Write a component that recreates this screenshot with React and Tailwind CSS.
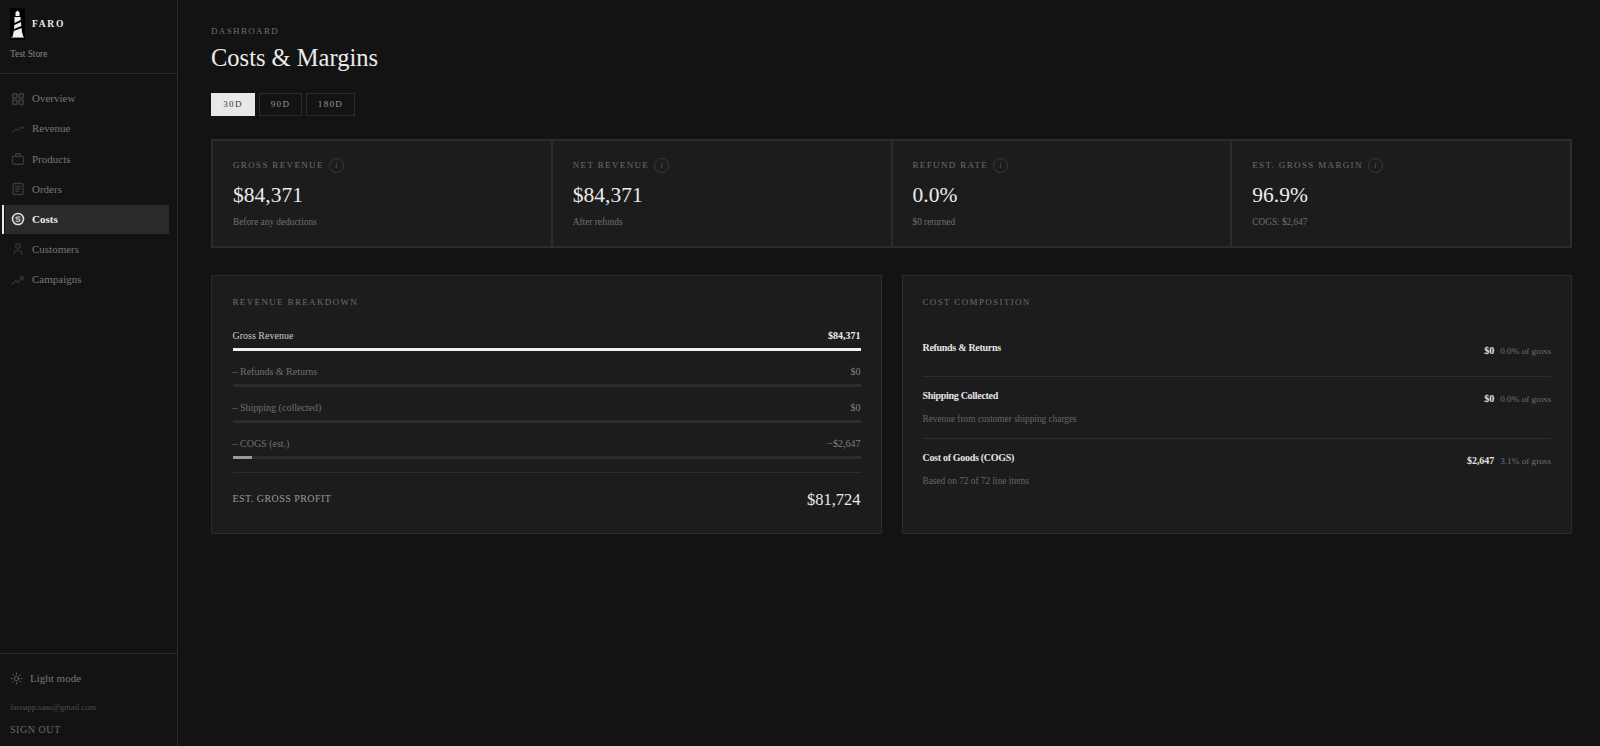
import React from "react";
import { User, Sun } from "lucide-react";

function Lighthouse() {
  return (
    <svg width="15" height="32" viewBox="0 0 15 32" className="shrink-0">
      <rect width="15" height="32" fill="#000" />
      <path d="M7.5 2.5 L9.5 4.5 L9.5 8 L5.5 8 L5.5 4.5 Z" fill="#eee" />
      <path d="M4.5 9 L10.5 9 L10.7 12 L4.5 15 Z" fill="#eee" />
      <path d="M4.3 17 L11 14 L11.3 18 L4 21 Z" fill="#eee" />
      <path d="M3.8 23 L11.6 20 L12 24 L13.5 29 L2.5 29 Z" fill="#eee" />
      <rect x="1" y="29" width="13" height="1" fill="#888" />
    </svg>
  );
}

function Svg({ children, className, sw = 1.8 }) {
  return (
    <svg width="14" height="14" viewBox="0 0 24 24" fill="none" stroke="currentColor" strokeWidth={sw} strokeLinecap="round" strokeLinejoin="round" className={`shrink-0 ${className}`}>
      {children}
    </svg>
  );
}

const GridIcon = (p) => (
  <Svg {...p} sw={3}>
    <rect x="3" y="3" width="7" height="7" rx="1" />
    <rect x="14" y="3" width="7" height="7" rx="1" />
    <rect x="3" y="14" width="7" height="7" rx="1" />
    <rect x="14" y="14" width="7" height="7" rx="1" />
  </Svg>
);
const WaveIcon = (p) => (
  <Svg {...p}>
    <path d="M2 18 L8 12 L12 14 L16 9 L19 11 L22 9" />
  </Svg>
);
const BagIcon = (p) => (
  <Svg {...p} sw={2.2}>
    <rect x="2.5" y="7.5" width="19" height="13.5" rx="2" />
    <path d="M8 7.5 V4 a1 1 0 0 1 1 -1 h6 a1 1 0 0 1 1 1 V7.5" />
  </Svg>
);
const DocIcon = (p) => (
  <Svg {...p} sw={2.4}>
    <rect x="3.5" y="2.5" width="17" height="19" rx="1.5" />
    <path d="M8 8 h8 M8 12 h8 M8 16 h5" />
  </Svg>
);
const CoinIcon = (p) => (
  <Svg {...p} sw={2.6}>
    <circle cx="12" cy="12" r="9.5" fill="#3a3a3a" />
    <path d="M15.5 8.5 h-5 a1.8 1.8 0 1 0 0 3.6 h3 a1.8 1.8 0 1 1 0 3.6 h-5" strokeWidth="1.8" />
  </Svg>
);
const UserIcon = ({ className }) => <User size={14} strokeWidth={1.8} className={`shrink-0 ${className}`} />;
const TrendIcon = (p) => (
  <Svg {...p} sw={2}>
    <path d="M2 19 L8 13 L12 16 L20 7" />
    <path d="M15.5 7 H20.5 V12" />
  </Svg>
);

function Nav({ icon: I, label, active }) {
  return (
    <div className="relative h-[29px] mb-[1.2px] flex items-center">
      {active && <div className="absolute left-[-8.5px] top-0 w-[2.5px] h-[29px] bg-[#e8e8e8]" />}
      <div className={`flex items-center gap-[7px] h-full w-[164px] -ml-[5px] pl-[6px] ${active ? "bg-[#2a2a2a] font-bold" : ""}`}>
        <I className={active ? "text-[#e0e0e0]" : "text-[#393939]"} />
        <span className={`text-[11px] ${active ? "text-[#ececec]" : "text-[#767676]"}`}>{label}</span>
      </div>
    </div>
  );
}

function Kpi({ label, value, sub }) {
  return (
    <div className="flex-1 bg-[#1c1c1c] pl-[20px] pt-[17px] h-[105px]">
      <div className="flex items-center gap-[5px] h-[16px]">
        <span className="text-[9px] tracking-[1.35px] text-[#6e6e6e] uppercase">{label}</span>
        <span className="w-[15px] h-[15px] rounded-full border border-[#3a3a3a] text-[9px] text-[#555] italic flex items-center justify-center -mt-[1px]">i</span>
      </div>
      <div className="text-[21.5px] leading-[26px] text-[#ebebeb] mt-[8px]">{value}</div>
      <div className="text-[9.3px] text-[#707070] mt-[8px]">{sub}</div>
    </div>
  );
}

function Bar({ label, value, fill, strong }) {
  return (
    <div className="mb-[13px]">
      <div className="flex justify-between items-center h-[14px]">
        <span className={`text-[10px] ${strong ? "text-[#c8c8c8]" : "text-[#707070]"}`}>{label}</span>
        <span className={`text-[10px] ${strong ? "text-[#ebebeb] font-bold" : "text-[#808080]"}`}>{value}</span>
      </div>
      <div className="h-[3px] mt-[6px] bg-[#2c2c2c]">{fill}</div>
    </div>
  );
}

function Cost({ name, note, value, pct, h, border }) {
  return (
    <div className={`flex justify-between ${h} ${border ? "border-b border-[#2c2c2c]" : ""}`}>
      <div>
        <div className="text-[10px] tracking-[-0.3px] font-bold text-[#e4e4e4] leading-[14px]">{name}</div>
        {note && <div className="text-[9.3px] text-[#666] mt-[9.5px] leading-[13px]">{note}</div>}
      </div>
      <div className="flex items-baseline gap-[6px] h-[14px] mt-[3px]">
        <span className="text-[10px] tracking-[-0.05px] font-bold text-[#e4e4e4] leading-[14px]">{value}</span>
        <span className="text-[9.2px] text-[#707070] leading-[14px]">{pct}</span>
      </div>
    </div>
  );
}

export default function App() {
  return (
    <div className="flex h-[746px] w-[1600px] bg-[#131313] overflow-hidden" style={{ fontFamily: '"Liberation Serif", serif' }}>
      <aside className="w-[178px] shrink-0 border-r border-[#2a2a2a] flex flex-col">
        <div className="h-[74px] border-b border-[#2a2a2a] pl-[10px] pt-[8px]">
          <div className="flex items-center gap-[7px]">
            <Lighthouse />
            <span className="text-[9.5px] font-bold tracking-[1.7px] text-[#ececec]">FARO</span>
          </div>
          <div className="text-[9.3px] text-[#888] mt-[8px]">Test Store</div>
        </div>
        <nav className="pl-[10px] pt-[10px] flex-1">
          <Nav icon={GridIcon} label="Overview" />
          <Nav icon={WaveIcon} label="Revenue" />
          <Nav icon={BagIcon} label="Products" />
          <Nav icon={DocIcon} label="Orders" />
          <Nav icon={CoinIcon} label="Costs" active />
          <Nav icon={UserIcon} label="Customers" />
          <Nav icon={TrendIcon} label="Campaigns" />
        </nav>
        <div className="h-[93px] border-t border-[#2a2a2a] pl-[10px] pt-[17px]">
          <div className="flex items-center gap-[7px] h-[14px]">
            <Sun size={13} strokeWidth={1.5} className="text-[#777]" />
            <span className="text-[11px] text-[#777]">Light mode</span>
          </div>
          <div className="text-[8.5px] text-[#4d4d4d] mt-[16px]">faroapp.saas@gmail.com</div>
          <div className="text-[10px] text-[#6a6a6a] tracking-[0.55px] mt-[8px]">SIGN OUT</div>
        </div>
      </aside>
      <main className="flex-1 pl-[33px] pr-[28px] pt-[25px]">
        <div className="text-[9px] tracking-[1.35px] text-[#6e6e6e] leading-[12px]">DASHBOARD</div>
        <h1 className="text-[24.5px] leading-[30px] text-[#ebebeb] mt-[6px]">Costs &amp; Margins</h1>
        <div className="flex gap-[4px] mt-[20px]">
          <button className="w-[44px] h-[23px] bg-[#e8e8e8] text-[#333] text-[9px] tracking-[1.35px]">30D</button>
          <button className="w-[43px] h-[23px] border border-[#2c2c2c] text-[#999] text-[9px] tracking-[1.35px]">90D</button>
          <button className="w-[49px] h-[23px] border border-[#2c2c2c] text-[#999] text-[9px] tracking-[1.35px]">180D</button>
        </div>
        <div className="flex gap-[2px] bg-[#2c2c2c] p-[2px] mt-[23px]">
          <Kpi label="Gross Revenue" value="$84,371" sub="Before any deductions" />
          <Kpi label="Net Revenue" value="$84,371" sub="After refunds" />
          <Kpi label="Refund Rate" value="0.0%" sub="$0 returned" />
          <Kpi label="Est. Gross Margin" value="96.9%" sub="COGS: $2,647" />
        </div>
        <div className="grid grid-cols-2 gap-[20px] mt-[27px]">
          <section className="h-[259px] bg-[#1c1c1c] border border-[#2c2c2c] pl-[20.5px] pr-[20px] pt-[20px]">
            <div className="text-[9px] tracking-[1.35px] text-[#6e6e6e] leading-[12px] mb-[20px]">REVENUE BREAKDOWN</div>
            <Bar label="Gross Revenue" value="$84,371" strong fill={<div className="h-full w-full bg-[#f0f0f0]" />} />
            <Bar label="– Refunds & Returns" value="$0" />
            <Bar label="– Shipping (collected)" value="$0" />
            <Bar label="– COGS (est.)" value="−$2,647" fill={<div className="h-full w-[3.1%] bg-[#999]" />} />
            <div className="border-t border-[#2c2c2c] flex justify-between items-center pt-[15px] mt-[2px]">
              <span className="text-[10px] tracking-[0.45px] text-[#999] mb-[4px]">EST. GROSS PROFIT</span>
              <span className="text-[16.5px] text-[#ebebeb]">$81,724</span>
            </div>
          </section>
          <section className="h-[259px] bg-[#1c1c1c] border border-[#2c2c2c] pl-[20px] pr-[20px] pt-[20px]">
            <div className="text-[9px] tracking-[1.35px] text-[#6e6e6e] leading-[12px] mb-[33px]">COST COMPOSITION</div>
            <Cost name="Refunds & Returns" value="$0" pct="0.0% of gross" h="h-[36px]" border />
            <div className="h-[12px]" />
            <Cost name="Shipping Collected" note="Revenue from customer shipping charges" value="$0" pct="0.0% of gross" h="h-[50px]" border />
            <div className="h-[12px]" />
            <Cost name="Cost of Goods (COGS)" note="Based on 72 of 72 line items" value="$2,647" pct="3.1% of gross" h="h-[40px]" />
          </section>
        </div>
      </main>
    </div>
  );
}
